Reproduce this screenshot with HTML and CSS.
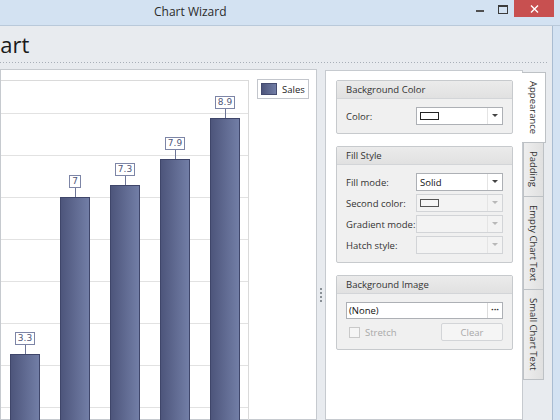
FILE: index.html
```html
<!DOCTYPE html>
<html>
<head>
<meta charset="utf-8">
<title>Chart Wizard</title>
<link rel="stylesheet" href="styles.css">
</head>
<body>
<div class="titlebar">
  <span class="title">Chart Wizard</span>
  <div class="controls">
    <span class="btn-min"></span>
    <span class="btn-max"></span>
    <span class="btn-close">
      <svg width="9" height="8" viewBox="0 0 9 8"><path d="M1 0.5 L8 7.5 M8 0.5 L1 7.5" stroke="#fff" stroke-width="1.4" fill="none"/></svg>
    </span>
  </div>
</div>
<div class="frame">
  <div class="client">
    <div class="header"><h1 class="page-title">Chart</h1></div>
    <div class="main">
      <div class="chart-panel">
        <div class="plot">
          <div class="bar-col"><span class="val">3.3</span><span class="stem"></span><div class="bar" style="height:137px"></div></div>
          <div class="bar-col"><span class="val">7</span><span class="stem"></span><div class="bar" style="height:294px"></div></div>
          <div class="bar-col"><span class="val">7.3</span><span class="stem"></span><div class="bar" style="height:306px"></div></div>
          <div class="bar-col"><span class="val">7.9</span><span class="stem"></span><div class="bar" style="height:332px"></div></div>
          <div class="bar-col"><span class="val">8.9</span><span class="stem"></span><div class="bar" style="height:373px"></div></div>
        </div>
        <div class="legend"><span class="swatch"></span><span>Sales</span></div>
      </div>
      <div class="splitter"><span class="grip"></span></div>
      <div class="tabctl">
        <div class="tabpage">
          <div class="group">
            <div class="group-head">Background Color</div>
            <div class="group-body">
              <div class="row">
                <span class="lbl">Color:</span>
                <div class="combo"><span class="combo-val"><span class="color-sw"></span></span><span class="arrow"></span></div>
              </div>
            </div>
          </div>
          <div class="group">
            <div class="group-head">Fill Style</div>
            <div class="group-body">
              <div class="row">
                <span class="lbl">Fill mode:</span>
                <div class="combo"><span class="combo-val">Solid</span><span class="arrow"></span></div>
              </div>
              <div class="row">
                <span class="lbl">Second color:</span>
                <div class="combo disabled"><span class="combo-val"><span class="color-sw"></span></span><span class="arrow"></span></div>
              </div>
              <div class="row">
                <span class="lbl">Gradient mode:</span>
                <div class="combo disabled"><span class="combo-val"></span><span class="arrow"></span></div>
              </div>
              <div class="row">
                <span class="lbl">Hatch style:</span>
                <div class="combo disabled"><span class="combo-val"></span><span class="arrow"></span></div>
              </div>
            </div>
          </div>
          <div class="group">
            <div class="group-head">Background Image</div>
            <div class="group-body">
              <div class="textbox"><span class="tb-val">(None)</span><span class="ellipsis">···</span></div>
              <div class="row row-split">
                <label class="check"><span class="box"></span>Stretch</label>
                <span class="button disabled-btn">Clear</span>
              </div>
            </div>
          </div>
        </div>
        <div class="tabstrip">
          <div class="tab active"><span>Appearance</span></div>
          <div class="tab t-padding"><span>Padding</span></div>
          <div class="tab t-empty"><span>Empty Chart Text</span></div>
          <div class="tab t-small"><span>Small Chart Text</span></div>
        </div>
      </div>
    </div>
  </div>
  <div class="frame-edge"></div>
</div>
</body>
</html>
```
FILE: styles.css
```css
* { box-sizing: border-box; }
html, body { margin: 0; padding: 0; }
body {
  width: 560px;
  height: 420px;
  overflow: hidden;
  background: #d3e2f2;
  font-family: "Open Sans", "Noto Sans", sans-serif;
  font-size: 9.5px;
  color: #222;
}

/* title bar */
.titlebar {
  height: 26px;
  display: flex;
  align-items: flex-start;
  border-bottom: 1px solid #b9c9da;
}
.title {
  margin-left: 154px;
  margin-top: 4px;
  font-size: 12px;
  line-height: 16px;
  color: #2b2b2b;
}
.controls {
  margin-left: auto;
  margin-right: 6px;
  display: flex;
  align-items: flex-start;
}
.btn-min {
  width: 8px;
  height: 2px;
  background: #505050;
  margin-top: 10px;
  margin-right: 14px;
}
.btn-max {
  width: 10px;
  height: 9px;
  border: 1px solid #3c3c3c;
  border-top-width: 2px;
  margin-top: 5px;
  margin-right: 6px;
}
.btn-close {
  width: 40px;
  height: 17px;
  background: #c85050;
  display: flex;
  align-items: center;
  justify-content: center;
}

/* frame */
.frame {
  display: flex;
  height: 394px;
}
.client {
  flex: 1;
  min-width: 0;
  background: #e8ebef;
  display: flex;
  flex-direction: column;
  overflow: hidden;
}
.frame-edge {
  width: 8px;
  border-left: 1px solid #a9bcd1;
  background: #d3e2f2;
}

/* header */
.header {
  height: 37px;
  margin-right: 5px;
  margin-bottom: 6px;
  background: repeating-linear-gradient(to right, #a8afb8 0 1px, transparent 1px 3px) left bottom / 100% 1px no-repeat;
}
.page-title {
  margin: 0 0 0 -27px;
  padding-top: 3px;
  font-size: 22px;
  line-height: 30px;
  font-weight: normal;
  color: #1a1a1a;
}

/* main area */
.main {
  flex: 1;
  display: flex;
  min-height: 0;
}
.chart-panel {
  width: 317px;
  flex: none;
  background: #fff;
  border: 1px solid #c6cacf;
  display: flex;
  align-items: flex-start;
  padding-top: 10px;
}
.plot {
  width: 248px;
  height: 411px;
  flex: none;
  border-top: 1px solid #dadada;
  border-right: 1px solid #dadada;
  padding-left: 9px;
  display: flex;
  align-items: flex-end;
  gap: 20px;
  background: repeating-linear-gradient(to top, transparent 0 41px, #e2e2e2 41px 42px);
}
.bar-col {
  width: 30px;
  display: flex;
  flex-direction: column;
  align-items: center;
}
.val {
  border: 1px solid #7d85a6;
  background: #fff;
  color: #4f577a;
  font-family: "DejaVu Sans", sans-serif;
  font-size: 9px;
  line-height: 11px;
  padding: 0 2px;
}
.stem {
  width: 1px;
  height: 9px;
  background: #6d7596;
}
.bar {
  width: 30px;
  border: 1px solid #3f466a;
  border-bottom: none;
  background: linear-gradient(to right, #4d557b, #727ea6);
}
.legend {
  margin-left: 8px;
  margin-top: -1px;
  width: 52px;
  height: 20px;
  border: 1px solid #c3c6cc;
  display: flex;
  align-items: center;
  padding-left: 3px;
  gap: 5px;
  color: #222;
}
.swatch {
  width: 16px;
  height: 12px;
  border: 1px solid #454c70;
  background: linear-gradient(to right, #4d557b, #727ea6);
}

/* splitter */
.splitter {
  width: 8px;
  flex: none;
  display: flex;
  justify-content: center;
  padding-top: 219px;
}
.grip {
  width: 2px;
  height: 14px;
  background: repeating-linear-gradient(to bottom, #8a9096 0 2px, transparent 2px 4px);
}

/* tab control */
.tabctl {
  flex: 1;
  display: flex;
  margin-top: 1px;
}
.tabpage {
  width: 198px;
  flex: none;
  background: #fff;
  border: 1px solid #c6cacf;
  padding: 9px 9px 0 10px;
  display: flex;
  flex-direction: column;
  gap: 12px;
}
.group {
  border: 1px solid #c7cacd;
  border-radius: 2px;
  background: #f0f0f0;
}
.group-head {
  height: 18px;
  line-height: 17px;
  padding-left: 9px;
  background: linear-gradient(#ebebeb, #e1e1e1);
  border-bottom: 1px solid #d3d5d8;
  color: #333;
}
.group-body {
  padding: 8px 9px 8px 9px;
  display: flex;
  flex-direction: column;
  gap: 3px;
}
.row {
  display: flex;
  align-items: center;
  height: 18px;
}
.lbl {
  width: 70px;
  flex: none;
  color: #333;
}
.combo {
  width: 87px;
  height: 18px;
  border: 1px solid #adb0b5;
  background: #fff;
  display: flex;
}
.combo-val {
  flex: 1;
  display: flex;
  align-items: center;
  padding-left: 3px;
  color: #111;
}
.color-sw {
  width: 19px;
  height: 8px;
  border: 1px solid #222;
  background: #fff;
}
.arrow {
  width: 15px;
  border-left: 1px solid #e4e4e4;
  position: relative;
}
.arrow::after {
  content: "";
  position: absolute;
  left: 4px;
  top: 6px;
  border-left: 3px solid transparent;
  border-right: 3px solid transparent;
  border-top: 3px solid #444;
}
.combo.disabled {
  background: #f3f3f3;
  border-color: #d2d4d7;
}
.combo.disabled .arrow::after { border-top-color: #b8b8b8; }
.combo.disabled .color-sw { border-color: #555; background: #f7f7f7; }

.textbox {
  height: 17px;
  border: 1px solid #adb0b5;
  background: #fff;
  display: flex;
}
.tb-val {
  flex: 1;
  padding-left: 2px;
  line-height: 15px;
  color: #111;
}
.ellipsis {
  width: 15px;
  border-left: 1px solid #dcdcdc;
  text-align: center;
  line-height: 13px;
  font-weight: bold;
  color: #333;
}
.row-split {
  justify-content: space-between;
  margin-top: 1px;
}
.check {
  display: flex;
  align-items: center;
  gap: 5px;
  padding-left: 3px;
  color: #a8a8a8;
}
.box {
  width: 11px;
  height: 11px;
  border: 1px solid #c9c9c9;
  background: #f5f5f5;
}
.button {
  width: 62px;
  height: 18px;
  border: 1px solid #d3d5d8;
  border-radius: 2px;
  background: #f5f5f5;
  display: flex;
  align-items: center;
  justify-content: center;
}
.disabled-btn { color: #a8a8a8; }

/* vertical tabs */
.tabstrip {
  flex: 1;
  padding-top: 2px;
  display: flex;
  flex-direction: column;
  align-items: flex-start;
}
.tab {
  width: 21px;
  border: 1px solid #bdc1c5;
  background: linear-gradient(to right, #eeeeee, #e0e0e0);
  writing-mode: vertical-rl;
  display: flex;
  align-items: center;
  justify-content: center;
  color: #333;
  margin-top: -1px;
}
.tab.active {
  width: 24px;
  height: 71px;
  margin-left: -1px;
  margin-top: 0;
  border-left: none;
  background: #fff;
  position: relative;
}
.t-padding { height: 55px; }
.t-empty { height: 94px; }
.t-small { height: 91px; }
```
